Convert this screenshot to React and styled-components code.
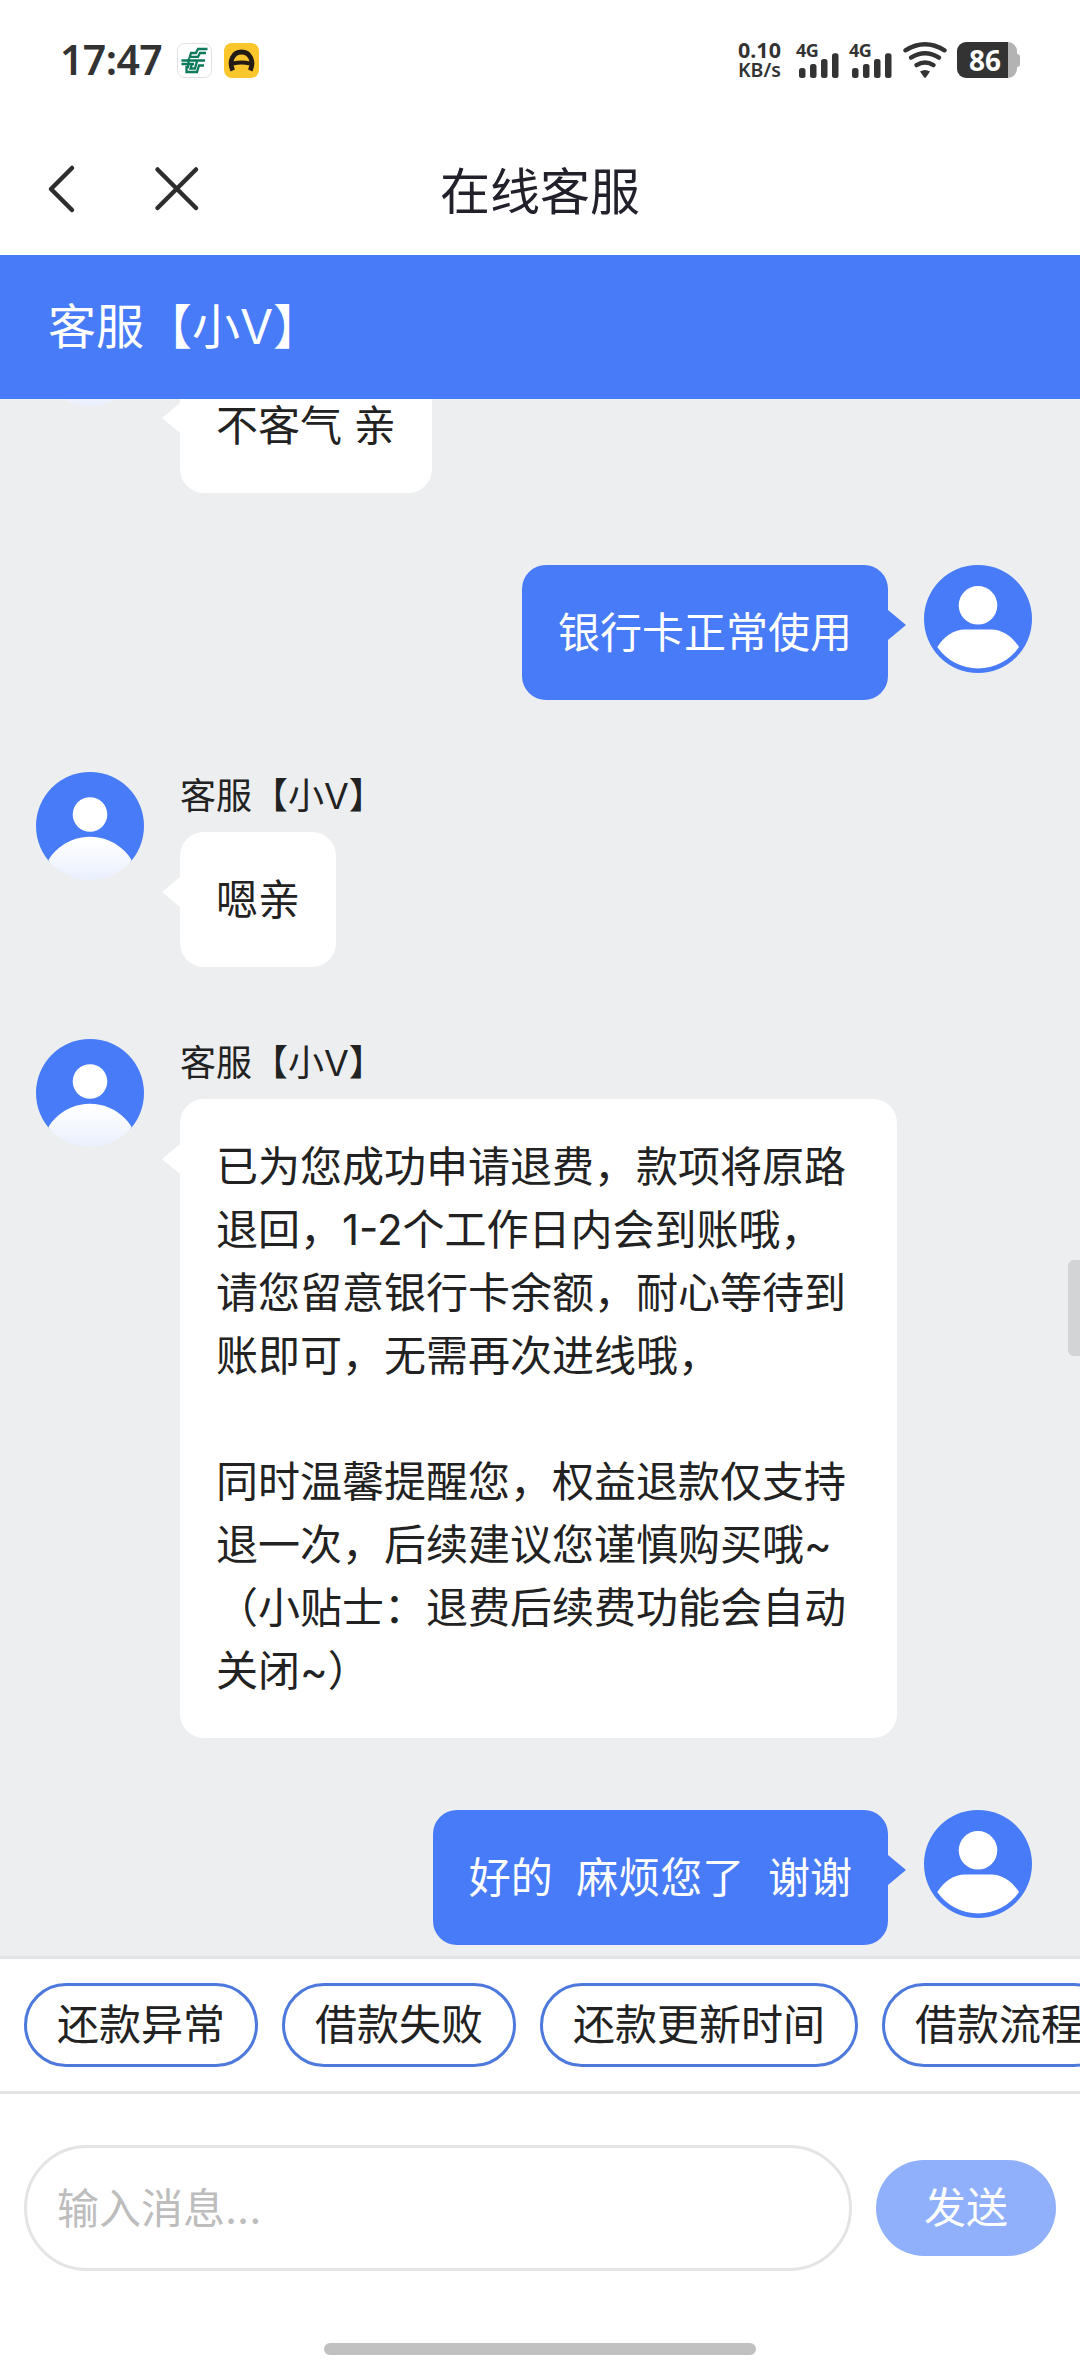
import React from 'react';
import styled, { createGlobalStyle } from 'styled-components';

const BLUE = '#487bf7';

const GlobalStyle = createGlobalStyle`
  * { box-sizing: border-box; }
  body { margin: 0; background: #fff; }
`;

const Screen = styled.div`
  width: 1080px;
  height: 2376px;
  display: flex;
  flex-direction: column;
  overflow: hidden;
  background: #fff;
  color: #222;
  font-family: Inter, "Noto Sans CJK SC", sans-serif;
  font-size: 42px;
  font-weight: 400;
`;

const StatusBar = styled.div`
  height: 120px;
  padding: 0 60px 0 60px;
  display: flex;
  align-items: center;
  justify-content: space-between;
  color: #333;
  font-family: "Noto Sans", sans-serif;
  font-weight: 700;
`;

const StatusGroup = styled.div`
  display: flex;
  align-items: center;
`;

const Clock = styled.span`
  width: 117px;
  font-size: 41px;
  line-height: 48px;
  font-weight: 600;
  letter-spacing: -0.6px;
  padding-bottom: 2px;
`;

const AppIcons = styled.div`
  display: flex;
  gap: 12px;
  svg { display: block; }
`;

const NetSpeed = styled.div`
  display: flex;
  flex-direction: column;
  width: 59px;
  font-size: 21.5px;
  line-height: 20px;
  small { font-size: 19.5px; font-weight: 600; }
`;

const Signal = styled.div`
  position: relative;
  width: 53px;
  height: 36px;
  svg { display: block; }
  span {
    position: absolute;
    left: -1px;
    top: 0;
    font-size: 18px;
    line-height: 16px;
    letter-spacing: -0.5px;
  }
`;

const WifiBox = styled.div`
  width: 54px;
  height: 36px;
  svg { display: block; }
`;

const Battery = styled.div`
  display: flex;
  align-items: center;
`;

const BatteryBody = styled.div`
  width: 60px;
  height: 36px;
  border-radius: 9px;
  background: linear-gradient(90deg, #333 0 51px, #b3b3b3 51px);
  color: #fff;
  font-size: 28px;
  line-height: 36px;
  padding-left: 12px;
`;

const BatteryCap = styled.div`
  width: 3px;
  height: 13px;
  border-radius: 0 3px 3px 0;
  background: #b3b3b3;
`;

const NavBar = styled.div`
  height: 135px;
  display: grid;
  grid-template-columns: 1fr auto 1fr;
  align-items: center;
  padding-top: 3px;
`;

const NavIcons = styled.div`
  display: flex;
  align-items: center;
  gap: 77px;
  padding-left: 45px;
  svg { display: block; }
`;

const NavTitle = styled.h1`
  margin: 0;
  padding-top: 6px;
  font-size: 50px;
  line-height: 60px;
  font-weight: 400;
  color: #22202b;
`;

const AgentBar = styled.div`
  height: 144px;
  padding-left: 48px;
  display: flex;
  align-items: center;
  background: ${BLUE};
  color: #fff;
  font-size: 48px;
  line-height: 72px;
`;

const Chat = styled.div`
  position: relative;
  height: 1557px;
  padding: 0 48px 11px 36px;
  display: flex;
  flex-direction: column;
  justify-content: flex-end;
  gap: 72px;
  overflow: hidden;
  background: #eceeef;
`;

const ScrollThumb = styled.div`
  position: absolute;
  right: 0;
  top: 861px;
  width: 12px;
  height: 96px;
  border-radius: 6px 0 0 6px;
  background: #d3d4d5;
`;

const Row = styled.div`
  display: flex;
  flex-shrink: 0;
  align-items: flex-start;
  gap: 36px;
  justify-content: ${(p) => (p.$mine ? 'flex-end' : 'flex-start')};
  > svg { display: block; flex-shrink: 0; }
`;

const Content = styled.div`
  display: flex;
  flex-direction: column;
  align-items: flex-start;
`;

const Name = styled.div`
  height: 60px;
  font-size: 36px;
  line-height: 49px;
`;

const Bubble = styled.div`
  position: relative;
  min-width: ${(p) => (p.$wide ? '717px' : '0')};
  padding: 36px;
  border-radius: 24px;
  line-height: 63px;
  white-space: pre;
  background: ${(p) => (p.$mine ? BLUE : '#fff')};
  color: ${(p) => (p.$mine ? '#fff' : '#222')};
  &::after {
    content: '';
    position: absolute;
    top: 45px;
    ${(p) => (p.$mine ? 'right: -18px' : 'left: -18px')};
    border: 15px solid transparent;
    border-width: ${(p) => (p.$mine ? '15px 0 15px 18px' : '15px 18px 15px 0')};
    ${(p) => (p.$mine ? 'border-left-color' : 'border-right-color')}: ${(p) => (p.$mine ? BLUE : '#fff')};
  }
`;

const QuickBar = styled.div`
  height: 138px;
  padding: 24px;
  display: flex;
  gap: 24px;
  overflow: hidden;
  border-top: 3px solid #e4e4e4;
  border-bottom: 3px solid #e4e4e4;
`;

const Chip = styled.button`
  flex-shrink: 0;
  height: 84px;
  padding: 0 30px;
  border: 3px solid #4d79dc;
  border-radius: 42px;
  background: #fff;
  color: #222;
  font: inherit;
  line-height: 78px;
  white-space: nowrap;
`;

const Composer = styled.div`
  padding: 51px 24px 0;
  display: flex;
  align-items: center;
  gap: 24px;
`;

const MessageInput = styled.input`
  flex: 1;
  min-width: 0;
  height: 126px;
  padding: 0 30px;
  border: 3px solid #e4e4e4;
  border-radius: 63px;
  background: #fff;
  outline: none;
  font: inherit;
  &::placeholder { color: #bdbdbd; opacity: 1; }
`;

const SendButton = styled.button`
  width: 180px;
  height: 96px;
  padding: 0;
  border: 0;
  border-radius: 48px;
  background: #90b0fb;
  color: #fff;
  font: inherit;
  line-height: 96px;
`;

const HomeBar = styled.div`
  width: 432px;
  height: 12px;
  margin: 72px auto 0;
  border-radius: 6px;
  background: #c1c1c1;
`;

const AgentAvatar = ({ id }) => (
  <svg width="108" height="108" viewBox="0 0 108 108">
    <defs>
      <linearGradient id={id} x1="0" y1="64" x2="0" y2="108" gradientUnits="userSpaceOnUse">
        <stop offset="0.1" stopColor="#fff" />
        <stop offset="1" stopColor="#e9effd" />
      </linearGradient>
      <clipPath id={`${id}c`}><circle cx="54" cy="54" r="54" /></clipPath>
    </defs>
    <g clipPath={`url(#${id}c)`}>
      <rect width="108" height="90" fill={BLUE} />
      <circle cx="54" cy="42.5" r="17.3" fill="#fff" />
      <circle cx="54" cy="113.5" r="48.8" fill={`url(#${id})`} />
    </g>
  </svg>
);

const UserAvatar = () => (
  <svg width="108" height="108" viewBox="0 0 108 108">
    <circle cx="54" cy="54" r="54" fill={BLUE} />
    <circle cx="54" cy="40.3" r="19.3" fill="#fff" />
    <path d="M13.3 82 C20 71 30 64.4 41 64.4 H67 C78 64.4 88 71 95 82 A49.6 49.6 0 0 1 13.3 82Z" fill="#fff" />
  </svg>
);

const PostIcon = () => (
  <svg width="35" height="35" viewBox="0 0 35 35">
    <rect x="0.5" y="0.5" width="34" height="34" rx="7" fill="#fff" stroke="#e3e0e1" />
    <g fill="none" stroke="#0c7a5b" strokeWidth="2.3">
      <path d="M30.500 6H21L19 10H14L12.500 15" />
      <path d="M29 10H23L21 13.800H13" />
      <path d="M4.500 17.500H28M4.500 21H17" />
      <path d="M12 15L11 24H9.500V29H20L22 22.500H27" />
      <path d="M15 21L13.500 25.500H18L20 18" />
    </g>
  </svg>
);

const RideIcon = () => (
  <svg width="35" height="35" viewBox="0 0 35 35">
    <rect width="35" height="35" rx="8" fill="#fbc52c" />
    <path d="M8.700 27.500C4.500 18 9 9 17.500 9S30.500 18 26.300 27.500" fill="none" stroke="#231c16" strokeWidth="4.800" />
    <path d="M9 20.500Q17.500 18.500 26 20.500" fill="none" stroke="#231c16" strokeWidth="4" />
  </svg>
);

const SignalMeter = () => (
  <Signal>
    <span>4G</span>
    <svg width="44" height="36" viewBox="0 0 44 36" fill="#333">
      <rect x="2" y="26" width="6.500" height="10" rx="2.500" />
      <rect x="13" y="22" width="6.500" height="14" rx="2.500" />
      <rect x="24" y="17" width="6.500" height="19" rx="2.500" />
      <rect x="35" y="11.300" width="6.500" height="24.700" rx="2.500" />
    </svg>
  </Signal>
);

const Wifi = () => (
  <WifiBox>
    <svg width="44" height="36" viewBox="0 0 44 36">
      <g fill="none" stroke="#333" strokeWidth="4.400" strokeLinecap="round">
        <path d="M2.500 8.300Q22 -3.800 41.500 8.300" />
        <path d="M8 15.700Q22 7 36 15.700" />
        <path d="M13.500 23.200Q22 18 30.500 23.200" />
      </g>
      <path d="M17 29.500Q22 26.500 27 29.500L23 35.200Q22 36.500 21 35.200Z" fill="#333" />
    </svg>
  </WifiBox>
);

const AGENT = '客服【小V】';

const NOTICE = [
  '已为您成功申请退费，款项将原路',
  '退回，1-2个工作日内会到账哦，',
  '请您留意银行卡余额，耐心等待到',
  '账即可，无需再次进线哦，',
  '',
  '同时温馨提醒您，权益退款仅支持',
  '退一次，后续建议您谨慎购买哦~',
  '（小贴士：退费后续费功能会自动',
  '关闭~）',
].join('\n');

const MESSAGES = [
  { text: '不客气 亲' },
  { text: '银行卡正常使用', mine: true },
  { text: '嗯亲' },
  { text: NOTICE, wide: true },
  { text: '好的  麻烦您了  谢谢', mine: true },
];

const CHIPS = ['还款异常', '借款失败', '还款更新时间', '借款流程'];

export default function App() {
  return (
    <Screen>
      <GlobalStyle />
      <StatusBar>
        <StatusGroup>
          <Clock>17:47</Clock>
          <AppIcons>
            <PostIcon />
            <RideIcon />
          </AppIcons>
        </StatusGroup>
        <StatusGroup>
          <NetSpeed>
            0.10
            <small>KB/s</small>
          </NetSpeed>
          <SignalMeter />
          <SignalMeter />
          <Wifi />
          <Battery>
            <BatteryBody>86</BatteryBody>
            <BatteryCap />
          </Battery>
        </StatusGroup>
      </StatusBar>
      <NavBar>
        <NavIcons>
          <svg width="32" height="50" viewBox="0 0 32 50" fill="none" stroke="#2d2d2d" strokeWidth="4.500" strokeLinecap="round" strokeLinejoin="round">
            <path d="M27 4L6 25L27 46" />
          </svg>
          <svg width="46" height="46" viewBox="0 0 46 46" fill="none" stroke="#2d2d2d" strokeWidth="4.500" strokeLinecap="round">
            <path d="M3.500 3.500L42 42M42 3.500L3.500 42" />
          </svg>
        </NavIcons>
        <NavTitle>在线客服</NavTitle>
      </NavBar>
      <AgentBar>{AGENT}</AgentBar>
      <Chat>
        {MESSAGES.map((m, i) =>
          m.mine ? (
            <Row key={i} $mine>
              <Bubble $mine>{m.text}</Bubble>
              <UserAvatar />
            </Row>
          ) : (
            <Row key={i}>
              <AgentAvatar id={`agent${i}`} />
              <Content>
                <Name>{AGENT}</Name>
                <Bubble $wide={m.wide}>{m.text}</Bubble>
              </Content>
            </Row>
          )
        )}
        <ScrollThumb />
      </Chat>
      <QuickBar>
        {CHIPS.map((c) => (
          <Chip key={c}>{c}</Chip>
        ))}
      </QuickBar>
      <Composer>
        <MessageInput placeholder="输入消息..." />
        <SendButton>发送</SendButton>
      </Composer>
      <HomeBar />
    </Screen>
  );
}
